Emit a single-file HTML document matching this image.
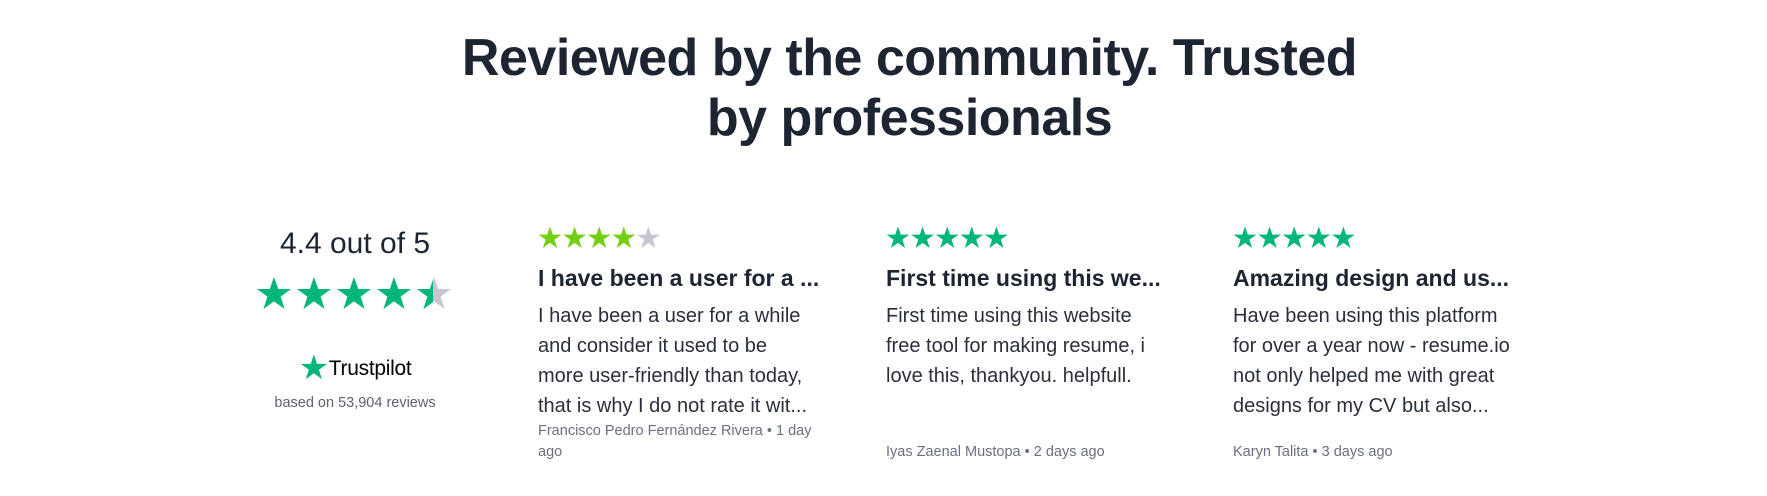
<!DOCTYPE html>
<html><head><meta charset="utf-8"><style>
*{margin:0;padding:0;box-sizing:border-box}
body{width:1767px;height:496px;background:#fff;font-family:"Liberation Sans",sans-serif;color:#1e2532;position:relative;overflow:hidden}
h1{position:absolute;left:26px;width:1767px;top:28px;text-align:center;font-size:52px;line-height:60px;font-weight:700;letter-spacing:-0.5px;color:#1e2532}
.abs{position:absolute}
.rating{left:255px;width:200px;top:227px;text-align:center;font-size:30px;line-height:34px}
.tp{left:255px;width:200px;top:353px;text-align:center;font-size:21px;line-height:30px;color:#000;letter-spacing:-0.3px}
.based{left:240px;width:230px;top:395px;text-align:center;font-size:14.5px;color:#5d6270}
.card{position:absolute;top:226px;width:300px;height:240px}
.card .t{position:absolute;top:38px;font-size:23px;font-weight:700;line-height:28px;white-space:nowrap}
.card p{position:absolute;top:75px;font-size:20px;line-height:30px;white-space:nowrap;color:#2a2f3b}
.card .a{position:absolute;font-size:14.5px;line-height:20.5px;color:#6b7080;width:290px}
</style></head><body>
<h1>Reviewed by the community. Trusted<br>by professionals</h1>
<div class="abs rating">4.4 out of 5</div>
<svg class="abs" style="left:256px;top:276px" width="200" height="36" viewBox="0 0 200 36">
<defs><path id="s" d="M18 1 L22.2 13 L35 13 L24.6 20.6 L28.6 33 L18 25.4 L7.4 33 L11.4 20.6 L1 13 L13.8 13 Z"/>
<clipPath id="h"><rect x="0" y="0" width="17" height="36"/></clipPath></defs>
<use href="#s" fill="#00b67a"/><use href="#s" x="40" fill="#00b67a"/><use href="#s" x="80" fill="#00b67a"/><use href="#s" x="120" fill="#00b67a"/>
<g transform="translate(160 0)"><use href="#s" fill="#c5c8d2"/><use href="#s" fill="#00b67a" clip-path="url(#h)"/></g>
</svg>
<div class="abs tp"><span style="color:#00b67a;font-size:34px;vertical-align:-4px">★</span>Trustpilot</div>
<div class="abs based">based on 53,904 reviews</div>

<div class="card" style="left:538px">
<svg width="125" height="24" viewBox="0 0 125 24"><defs><path id="m" d="M12 0.5 L14.8 8.6 L23.4 8.6 L16.4 13.6 L19.1 22 L12 16.9 L4.9 22 L7.6 13.6 L0.6 8.6 L9.2 8.6 Z"/></defs>
<use href="#m" fill="#73cf11"/><use href="#m" x="24.6" fill="#73cf11"/><use href="#m" x="49.2" fill="#73cf11"/><use href="#m" x="73.8" fill="#73cf11"/><use href="#m" x="98.4" fill="#c5c8d2"/></svg>
<div class="t">I have been a user for a ...</div>
<p>I have been a user for a while<br>and consider it used to be<br>more user-friendly than today,<br>that is why I do not rate it wit...</p>
<div class="a" style="top:195px">Francisco Pedro Fernández Rivera • 1 day ago</div>
</div>
<div class="card" style="left:886px">
<svg width="125" height="24" viewBox="0 0 125 24"><use href="#m" fill="#00b67a"/><use href="#m" x="24.6" fill="#00b67a"/><use href="#m" x="49.2" fill="#00b67a"/><use href="#m" x="73.8" fill="#00b67a"/><use href="#m" x="98.4" fill="#00b67a"/></svg>
<div class="t">First time using this we...</div>
<p>First time using this website<br>free tool for making resume, i<br>love this, thankyou. helpfull.</p>
<div class="a" style="top:216px">Iyas Zaenal Mustopa • 2 days ago</div>
</div>
<div class="card" style="left:1233px">
<svg width="125" height="24" viewBox="0 0 125 24"><use href="#m" fill="#00b67a"/><use href="#m" x="24.6" fill="#00b67a"/><use href="#m" x="49.2" fill="#00b67a"/><use href="#m" x="73.8" fill="#00b67a"/><use href="#m" x="98.4" fill="#00b67a"/></svg>
<div class="t">Amazing design and us...</div>
<p>Have been using this platform<br>for over a year now - resume.io<br>not only helped me with great<br>designs for my CV but also...</p>
<div class="a" style="top:216px">Karyn Talita • 3 days ago</div>
</div>
</body></html>
